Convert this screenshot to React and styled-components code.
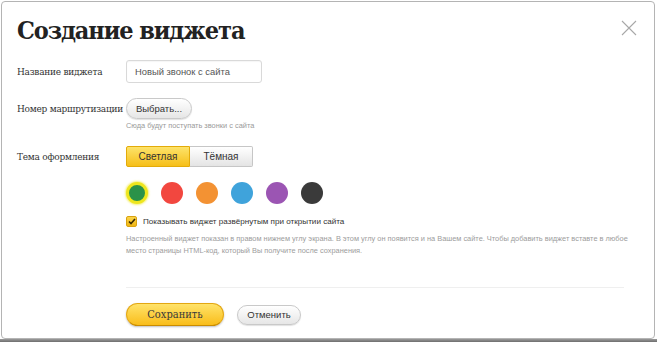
import React from "react";
import styled, { createGlobalStyle } from "styled-components";

const Global = createGlobalStyle`
  html, body { margin: 0; padding: 0; background: #fff; }
  body { width: 657px; height: 342px; overflow: hidden; }
`;

const serif = `"DejaVu Serif", "Liberation Serif", serif`;
const sans = `"Liberation Sans", Arial, sans-serif`;

const Page = styled.div`
  width: 657px;
  height: 342px;
  display: flex;
  flex-direction: column;
  background: #fff;
`;

const Dialog = styled.div`
  position: relative;
  box-sizing: border-box;
  margin: 1px 2px 0 1px;
  height: 338px;
  border: 1px solid #b4b4b4;
  border-radius: 4px;
  background: #fff;
  padding: 12px 16px 0 15px;
  display: flex;
  flex-direction: column;
`;

const Shade = styled.div`
  flex: 1;
  background: linear-gradient(#9a9a9a, #6e6e6e);
`;

const Title = styled.h1`
  margin: 0;
  font-family: ${serif};
  font-stretch: condensed;
  font-weight: bold;
  font-size: 25px;
  line-height: 34px;
  letter-spacing: -1.1px;
  color: #222;
`;

const Close = styled.button`
  position: absolute;
  top: 18px;
  right: 17px;
  width: 16px;
  height: 16px;
  padding: 0;
  border: 0;
  background: none;
  cursor: pointer;
`;

const Row = styled.div`
  display: flex;
  align-items: ${(p) => p.$align || "center"};
  margin-top: ${(p) => p.$mt || 0}px;
`;

const Label = styled.div`
  width: 109px;
  flex: none;
  font-family: ${serif};
  font-stretch: condensed;
  font-size: 10px;
  letter-spacing: -0.25px;
  line-height: ${(p) => p.$lh || "normal"};
  color: #333;
  white-space: nowrap;
`;

const Field = styled.div`
  display: flex;
  flex-direction: column;
  align-items: flex-start;
`;

const Input = styled.div`
  box-sizing: border-box;
  width: 136px;
  height: 23px;
  border: 1px solid #d9d9d9;
  border-radius: 3px;
  padding: 0 8px;
  display: flex;
  align-items: center;
  font-family: ${sans};
  font-size: 9.4px;
  color: #555;
  box-shadow: inset 0 1px 1px rgba(0,0,0,0.04);
`;

const PillButton = styled.button`
  box-sizing: border-box;
  height: ${(p) => p.$h || 21}px;
  width: ${(p) => p.$w}px;
  padding: 0;
  border: 1px solid #c9c9c9;
  border-radius: 11px;
  background: linear-gradient(#ffffff, #e6e6e6);
  box-shadow: 0 1px 1px rgba(0,0,0,0.12);
  font-family: ${sans};
  font-size: 9.5px;
  color: #333;
  cursor: pointer;
`;

const Hint = styled.div`
  margin-top: ${(p) => p.$mt || 4}px;
  font-family: ${sans};
  font-size: 7.4px;
  line-height: 12px;
  color: #9a9a9a;
`;

const Segmented = styled.div`
  display: flex;
  height: 21px;
`;

const Segment = styled.button`
  box-sizing: border-box;
  width: ${(p) => p.$w}px;
  height: 21px;
  padding: 0;
  font-family: ${sans};
  font-size: 10px;
  color: #333;
  cursor: pointer;
  border: 1px solid ${(p) => (p.$active ? "#e3ab0a" : "#c6c6c6")};
  border-radius: ${(p) => (p.$first ? "2px 0 0 2px" : "0 2px 2px 0")};
  border-left-width: ${(p) => (p.$first ? 1 : 0)}px;
  background: ${(p) =>
    p.$active
      ? "linear-gradient(#fde36a, #f6bf19)"
      : "linear-gradient(#ffffff, #e4e4e4)"};
`;

const Swatches = styled.div`
  display: flex;
  gap: 13px;
  margin-left: 109px;
  margin-top: 15px;
`;

const Swatch = styled.div`
  box-sizing: border-box;
  width: 22px;
  height: 22px;
  border-radius: 50%;
  background: ${(p) => p.$c};
  border: ${(p) => (p.$sel ? "3px solid #eee61e" : "none")};
  box-shadow: ${(p) => (p.$sel ? "0 0 2px 1px rgba(240,230,40,0.6)" : "none")};
`;

const Check = styled.label`
  display: flex;
  align-items: center;
  gap: 6px;
  margin-left: 109px;
  margin-top: 12px;
  font-family: ${sans};
  font-size: 8.1px;
  color: #333;
`;

const Box = styled.span`
  box-sizing: border-box;
  width: 11px;
  height: 11px;
  border-radius: 2px;
  background: linear-gradient(#fbd54a, #f0b512);
  border: 1px solid #d9a210;
  display: flex;
  align-items: center;
  justify-content: center;
`;

const Desc = styled.div`
  margin-left: 109px;
  margin-top: 6px;
  font-family: ${sans};
  font-size: 7.4px;
  line-height: 12px;
  color: #9c9c9c;
  width: 515px;
`;

const Divider = styled.div`
  margin: 30px 14px 0 109px;
  height: 1px;
  background: #efefef;
`;

const Actions = styled.div`
  display: flex;
  align-items: center;
  gap: 13px;
  margin-left: 109px;
  margin-top: 15px;
`;

const Save = styled.button`
  box-sizing: border-box;
  width: 98px;
  height: 23px;
  border: 1px solid #e3a712;
  border-bottom-color: #c98c00;
  border-radius: 12px;
  background: linear-gradient(#ffe36a, #f9bd1a);
  box-shadow: 0 1px 2px rgba(0,0,0,0.25);
  font-family: ${serif};
  font-stretch: condensed;
  font-size: 11px;
  color: #3a3a3a;
  cursor: pointer;
`;

const colors = ["#2b9249", "#f2473f", "#f39233", "#3fa3db", "#9b55b3", "#3a3a3a"];

export default function App() {
  return (
    <>
      <Global />
      <Page>
        <Dialog>
          <Close aria-label="Закрыть">
            <svg width="16" height="16" viewBox="0 0 16 16">
              <path d="M1 1 L15 15 M15 1 L1 15" stroke="#a8a8a8" strokeWidth="1.1" fill="none" />
            </svg>
          </Close>
          <Title>Создание виджета</Title>
          <Row $mt={12}>
            <Label>Название виджета</Label>
            <Input>Новый звонок с сайта</Input>
          </Row>
          <Row $mt={15} $align="flex-start">
            <Label $lh="21px">Номер маршрутизации</Label>
            <Field>
              <PillButton $w={66}>Выбрать...</PillButton>
              <Hint $mt={1}>Сюда будут поступать звонки с сайта</Hint>
            </Field>
          </Row>
          <Row $mt={14}>
            <Label>Тема оформления</Label>
            <Segmented>
              <Segment $first $active $w={64}>Светлая</Segment>
              <Segment $w={63}>Тёмная</Segment>
            </Segmented>
          </Row>
          <Swatches>
            {colors.map((c, i) => (
              <Swatch key={c} $c={c} $sel={i === 0} />
            ))}
          </Swatches>
          <Check>
            <Box>
              <svg width="8" height="7" viewBox="0 0 8 7">
                <path d="M1 3.5 L3 5.5 L7 1" stroke="#3a2a00" strokeWidth="1.6" fill="none" />
              </svg>
            </Box>
            Показывать виджет развёрнутым при открытии сайта
          </Check>
          <Desc>
            Настроенный виджет показан в правом нижнем углу экрана. В этом углу он появится и на Вашем сайте. Чтобы добавить виджет вставте в любое
            место страницы HTML-код, который Вы получите после сохранения.
          </Desc>
          <Divider />
          <Actions>
            <Save>Сохранить</Save>
            <PillButton $w={64} $h={20}>Отменить</PillButton>
          </Actions>
        </Dialog>
        <Shade />
      </Page>
    </>
  );
}
